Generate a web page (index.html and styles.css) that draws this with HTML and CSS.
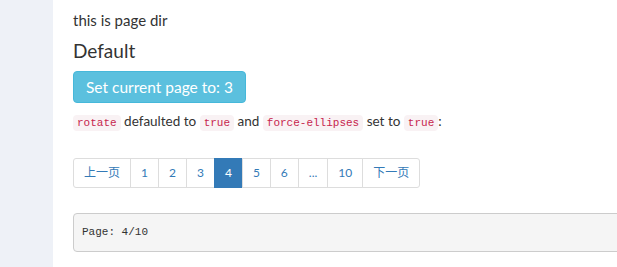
FILE: index.html
```html
<!DOCTYPE html>
<html lang="zh">
<head>
    <meta charset="UTF-8">
    <meta name="viewport" content="width=device-width, initial-scale=1.0">
    <title>page dir</title>
    <link rel="stylesheet" href="styles.css">
</head>
<body>
    <div class="layout">
        <aside class="sidebar"></aside>
        <main class="content">
            <p class="intro">this is page dir</p>
            <h4>Default</h4>
            <button class="btn btn-info">Set current page to: 3</button>
            <p class="desc">
                <code>rotate</code> defaulted to <code>true</code> and <code>force-ellipses</code> set to <code>true</code>:
            </p>
            <ul class="pagination">
                <li><a href="#">上一页</a></li>
                <li><a href="#">1</a></li>
                <li><a href="#">2</a></li>
                <li><a href="#">3</a></li>
                <li class="active"><a href="#">4</a></li>
                <li><a href="#">5</a></li>
                <li><a href="#">6</a></li>
                <li><a href="#">...</a></li>
                <li><a href="#">10</a></li>
                <li><a href="#">下一页</a></li>
            </ul>
            <pre>Page: 4/10</pre>
        </main>
    </div>
</body>
</html>
```

FILE: styles.css
```css
body {
    margin: 0;
    font-family: Lato, "Noto Sans CJK SC", sans-serif;
    font-size: 15px;
    line-height: 1.42857;
    color: #333;
    background-color: #fff;
    overflow: hidden;
}
.layout {
    display: flex;
    min-height: 100vh;
}
.sidebar {
    width: 53px;
    flex: none;
    background-color: #eef1f7;
}
.content {
    flex: none;
    width: 700px;
    padding: 10px 20px;
}
.intro {
    margin: 0 0 10px;
}
h4 {
    margin: 0 0 9px;
    font-size: 19px;
    font-weight: normal;
    line-height: 1.1;
}
.btn {
    display: inline-block;
    padding: 5px 12px;
    font-family: inherit;
    font-size: 15.5px;
    line-height: 20px;
    border: 1px solid transparent;
    border-radius: 4px;
    cursor: pointer;
}
.btn-info {
    color: #fff;
    background-color: #5bc0de;
    border-color: #46b8da;
}
.desc {
    margin: 9px 0 26px;
    font-size: 13.5px;
}
code {
    padding: 2px 4px;
    font-family: "Liberation Mono", monospace;
    font-size: 11px;
    color: #c7254e;
    background-color: #f9f2f4;
    border-radius: 4px;
}
.pagination {
    display: flex;
    margin: 0 0 25px;
    padding: 0;
    list-style: none;
}
.pagination li a {
    display: block;
    margin-left: -1px;
    padding: 5px 10px;
    font-size: 12px;
    line-height: 1.5;
    color: #337ab7;
    text-decoration: none;
    background-color: #fff;
    border: 1px solid #ddd;
}
.pagination li:first-child a {
    margin-left: 0;
    border-radius: 3px 0 0 3px;
}
.pagination li:last-child a {
    border-radius: 0 3px 3px 0;
}
.pagination li.active a {
    color: #fff;
    background-color: #337ab7;
    border-color: #337ab7;
}
pre {
    margin: 0;
    padding: 10px 8px 9px;
    font-family: "Liberation Mono", monospace;
    font-size: 11px;
    line-height: 1.6;
    color: #333;
    background-color: #f5f5f5;
    border: 1px solid #ccc;
    border-radius: 4px;
}
```
